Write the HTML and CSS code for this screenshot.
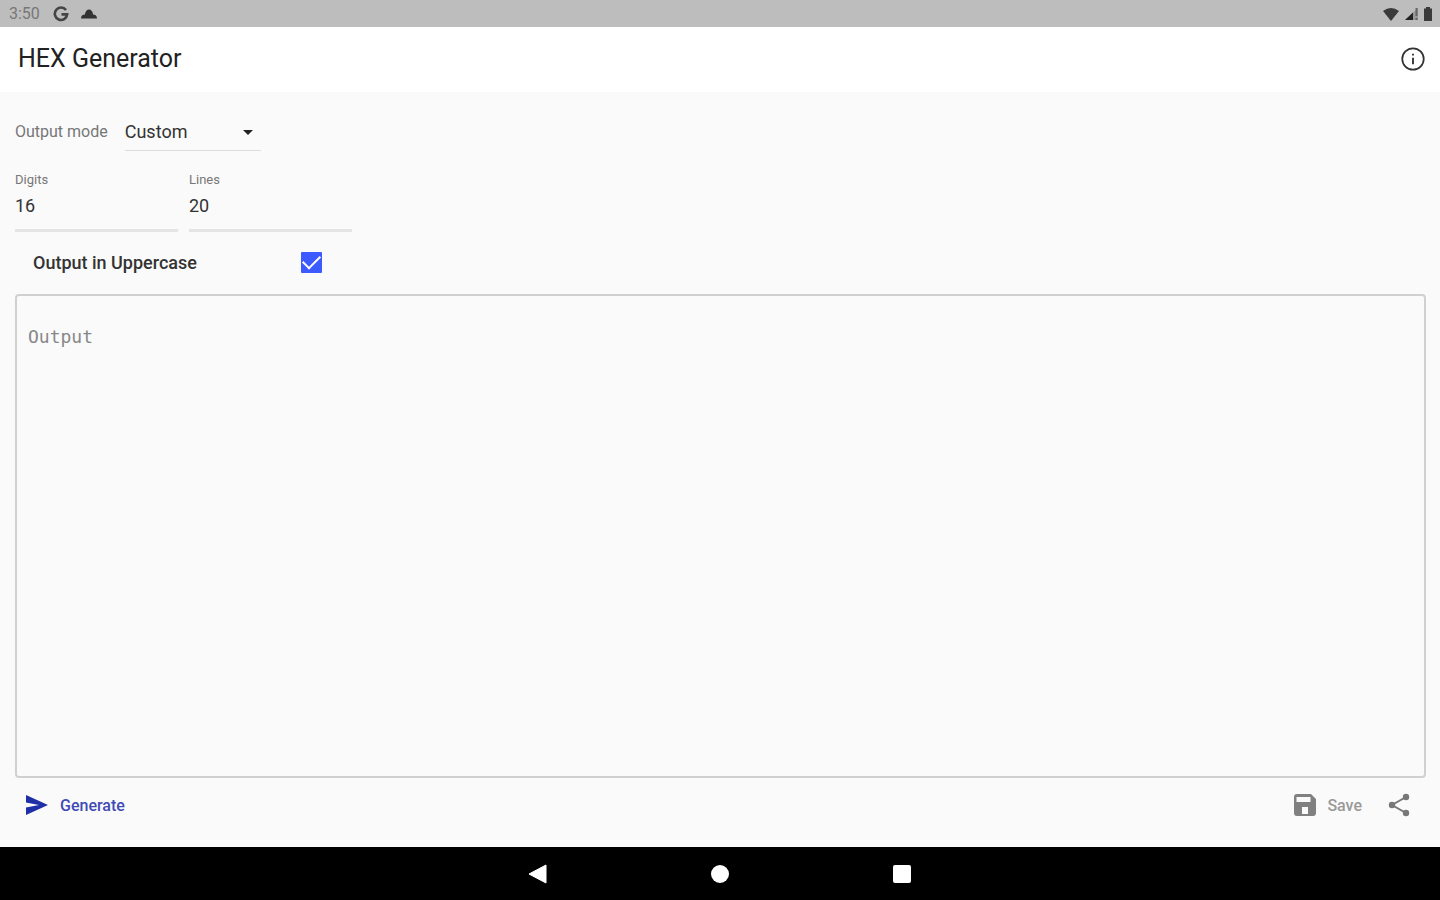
FILE: index.html
```html
<!DOCTYPE html>
<html lang="en">
<head>
    <meta charset="UTF-8">
    <meta name="viewport" content="width=device-width, initial-scale=1.0">
    <title>HEX Generator</title>
    <link rel="stylesheet" href="styles.css">
</head>
<body>
    <div class="status-bar">
        <span class="clock">3:50</span>
        <svg class="google" width="16" height="16" viewBox="0 0 16 16"><path d="M13 4A6.2 6.2 0 1 0 14.2 8.4H8.5" fill="none" stroke="#444" stroke-width="2.6"/></svg>
        <svg class="cloud" width="18" height="10" viewBox="0 0 18 10"><path d="M1 9.500C1 7 2.500 5.500 5 5.500 5 2.500 7 0.500 9 0.500s4 2 4 5c2.500 0 4 1.500 4 4z" fill="#333"/></svg>
        <div class="status-icons">
            <svg width="18" height="14" viewBox="0 0 18 14"><path d="M1 4Q9-2 17 4L9 14z" fill="#3a3a3a"/></svg>
            <svg width="15" height="14" viewBox="0 0 15 14"><path d="M1 13L14 1v12z" fill="#999"/><path d="M1 13L9 5.600V13z" fill="#222"/><path d="M12.500 1v8M12.500 11v2" stroke="#666" stroke-width="2"/></svg>
            <svg width="10" height="14" viewBox="0 0 10 14"><path d="M3 0h4v1.500h2V14H1V1.500h2z" fill="#3a3a3a"/></svg>
        </div>
    </div>

    <header class="app-bar">
        <h1>HEX Generator</h1>
        <button class="icon-button" type="button" aria-label="About">
            <svg width="28" height="28" viewBox="0 0 24 24"><circle cx="12" cy="12" r="9.200" fill="none" stroke="#333" stroke-width="1.500"/><path d="M11.200 7.500h1.600v1.600h-1.600zm0 3.500h1.600v5.500h-1.600z" fill="#333"/></svg>
        </button>
    </header>

    <main>
        <div class="mode-row">
            <label for="mode">Output mode</label>
            <div class="select-wrap">
                <select id="mode">
                    <option>Custom</option>
                </select>
                <svg class="arrow" width="10" height="5" viewBox="0 0 10 5"><path d="M0 0h10L5 5z" fill="#222"/></svg>
            </div>
        </div>

        <div class="fields">
            <div class="field">
                <label for="digits">Digits</label>
                <input type="text" inputmode="numeric" id="digits" value="16">
            </div>
            <div class="field">
                <label for="lines">Lines</label>
                <input type="text" inputmode="numeric" id="lines" value="20">
            </div>
        </div>

        <div class="check-row">
            <label for="uppercase">Output in Uppercase</label>
            <input type="checkbox" id="uppercase" checked>
        </div>

        <textarea class="output" placeholder="Output" aria-label="Output" readonly></textarea>

        <div class="actions">
            <button class="generate" type="button">
                <svg width="22" height="20" viewBox="0 0 22 20"><path d="M0 0L22 10 0 20V12.500L13 10 0 7.500z" fill="#1f2fa8"/></svg>
                Generate
            </button>
            <button class="save" type="button">
                <svg width="22" height="22" viewBox="0 0 22 22"><path fill-rule="evenodd" d="M3 0h14l5 5v14a3 3 0 0 1-3 3H3a3 3 0 0 1-3-3V3a3 3 0 0 1 3-3zM2.500 3v5h14V3zM8 13v7h6v-7z" fill="#808080"/></svg>
                Save
            </button>
            <button class="share" type="button" aria-label="Share">
                <svg width="22" height="24" viewBox="0 0 22 24"><path d="M18 4L4 12l14 8" fill="none" stroke="#777" stroke-width="2"/><circle cx="18" cy="4" r="3.200" fill="#777"/><circle cx="4" cy="12" r="3.200" fill="#777"/><circle cx="18" cy="20" r="3.200" fill="#777"/></svg>
            </button>
        </div>
    </main>

    <nav class="nav-bar">
        <button type="button" aria-label="Back"><svg width="20" height="20" viewBox="0 0 20 20"><path d="M18 1v18L1 10z" fill="#fff" stroke="#fff" stroke-linejoin="round"/></svg></button>
        <button type="button" aria-label="Home"><svg width="20" height="20" viewBox="0 0 20 20"><circle cx="10" cy="10" r="9" fill="#fff"/></svg></button>
        <button type="button" aria-label="Recent apps"><svg width="20" height="20" viewBox="0 0 20 20"><rect x="1" y="1" width="18" height="18" rx="2" fill="#fff"/></svg></button>
    </nav>
</body>
</html>
```

FILE: styles.css
```css
* {
    box-sizing: border-box;
}
body {
    margin: 0;
    min-height: 100vh;
    display: flex;
    flex-direction: column;
    background-color: #fafafa;
    color: #333;
    font-family: Roboto, "Liberation Sans", sans-serif;
}
svg {
    display: block;
}
button {
    display: flex;
    align-items: center;
    padding: 0;
    border: none;
    background: none;
    font: inherit;
    cursor: pointer;
}
.status-bar {
    display: flex;
    align-items: center;
    height: 27px;
    padding: 0 7px 0 9px;
    background-color: #bdbdbd;
}
.clock {
    color: #777;
    font-size: 16px;
}
.google {
    margin-left: 13px;
}
.cloud {
    margin-left: 11px;
}
.status-icons {
    display: flex;
    align-items: center;
    gap: 4px;
    margin-left: auto;
}
.app-bar {
    display: flex;
    align-items: center;
    justify-content: space-between;
    height: 65px;
    padding: 0 13px 2px 18px;
    background-color: #fff;
}
h1 {
    margin: 0;
    color: #222;
    font-size: 25px;
    font-weight: 400;
}
main {
    flex: 1;
    display: flex;
    flex-direction: column;
    padding: 20px 14px 15px 15px;
}
.mode-row {
    display: flex;
    align-items: center;
    gap: 17px;
}
.mode-row label {
    color: #777;
    font-size: 16px;
}
.select-wrap {
    position: relative;
    width: 136px;
}
.select-wrap select {
    width: 100%;
    height: 39px;
    padding: 0;
    border: none;
    border-bottom: 1px solid #ddd;
    border-radius: 0;
    background: none;
    appearance: none;
    color: #333;
    font-family: inherit;
    font-size: 18px;
}
.arrow {
    position: absolute;
    top: 18px;
    right: 8px;
    pointer-events: none;
}
.fields {
    display: flex;
    gap: 11px;
    margin-top: 21px;
}
.field {
    width: 163px;
}
.field label {
    display: block;
    color: #777;
    font-size: 13px;
    line-height: 16px;
}
.field input {
    display: block;
    width: 100%;
    height: 44px;
    padding: 0 0 6px;
    border: none;
    border-bottom: 3px solid #e4e4e4;
    background: none;
    color: #333;
    font-family: inherit;
    font-size: 18px;
}
.check-row {
    display: flex;
    align-items: center;
    justify-content: space-between;
    width: 307px;
    height: 62px;
    padding: 0 0 2px 18px;
}
.check-row label {
    font-size: 18px;
    font-weight: 500;
}
.check-row input {
    display: grid;
    place-items: center;
    width: 21px;
    height: 21px;
    margin: 0;
    border-radius: 1px;
    appearance: none;
    border: 2px solid #777;
}
.check-row input:checked {
    border-color: #3d5afe;
    background-color: #3d5afe;
}
.check-row input:checked::after {
    content: "";
    width: 15px;
    height: 8px;
    margin-bottom: 5px;
    border: solid #fff;
    border-width: 0 0 2px 2px;
    transform: rotate(-45deg);
}
.output {
    flex: 1;
    width: 100%;
    padding: 31px 11px;
    border: 2px solid #d0d0d0;
    border-radius: 4px;
    background: none;
    color: #333;
    font-family: "DejaVu Sans Mono", monospace;
    font-size: 18px;
    line-height: 20px;
    resize: none;
}
.output::placeholder {
    color: #888;
}
.actions {
    display: flex;
    align-items: center;
    height: 54px;
    padding: 0 16px 0 11px;
    font-size: 16px;
    font-weight: 500;
}
.generate {
    gap: 12px;
    color: #3f4bb5;
}
.save {
    gap: 11px;
    margin-left: auto;
    color: #999;
}
.share {
    margin-left: 26px;
}
.nav-bar {
    display: flex;
    align-items: center;
    justify-content: center;
    gap: 162px;
    height: 53px;
    background-color: #000;
}
```
